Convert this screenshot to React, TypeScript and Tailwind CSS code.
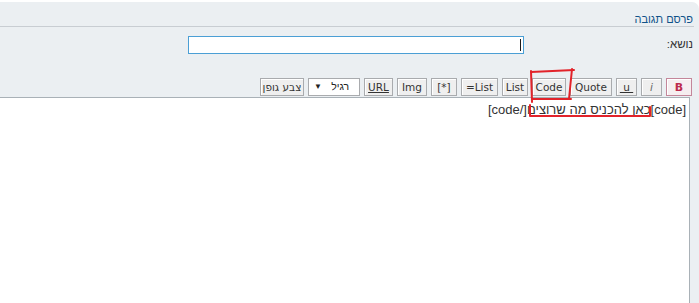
import React from 'react'

const btn =
  'h-[18px] flex items-center justify-center border border-[#a9abae] bg-[#efefef] shadow-[inset_1px_1px_0_#ffffff] text-[#333] text-[10.5px] leading-none font-["DejaVu_Sans",sans-serif]'

export default function App() {
  return (
    <div dir="rtl" className="relative w-[699px] h-[303px] overflow-hidden bg-white font-['Liberation_Sans',sans-serif]">
      <div className="mt-[2px] h-[301px] bg-[#ebeff2] rounded-tr-[7px]">
        {/* header */}
        <div className="mr-[5px] border-b border-[#c8cdd2]">
          <h3 className="pt-[10px] pr-[1px] text-[11px] leading-[14px] text-[#105289]">פרסם תגובה</h3>
        </div>

        {/* subject row */}
        <div className="mt-[9px] flex items-center">
          <div className="w-[175px] pr-[6px] text-[11.5px] text-[#333]">נושא:</div>
          <div className="w-[336px] h-[18px] border border-[#4b9fd5] bg-white flex items-center">
            <span className="mr-[2px] w-px h-[12px] bg-[#1a1a1a]" />
          </div>
        </div>

        {/* toolbar */}
        <div className="mt-[24px] pr-[7px] flex items-center gap-[4px]">
          <button dir="ltr" className={`${btn} w-[26px] border-[#c4869a] bg-[#f6eef0] text-[#bc2a4d] font-bold text-[11px]`}>B</button>
          <button dir="ltr" className={`${btn} w-[21px] italic text-[#666]`}>i</button>
          <button dir="ltr" className={`${btn} w-[21px] underline`}>&nbsp;u&nbsp;</button>
          <button dir="ltr" className={`${btn} w-[42px]`}>Quote</button>
          <button dir="ltr" className={`${btn} w-[34px]`}>Code</button>
          <button dir="ltr" className={`${btn} w-[26px]`}>List</button>
          <button dir="ltr" className={`${btn} w-[37px]`}>=List</button>
          <button dir="ltr" className={`${btn} w-[26px]`}>[*]</button>
          <button dir="ltr" className={`${btn} w-[30px]`}>Img</button>
          <button dir="ltr" className={`${btn} w-[29px] underline font-medium text-[#222]`}>URL</button>
          <div className="w-[52px] h-[18px] flex items-center justify-between pr-[10px] pl-[5px] border border-[#a9abae] bg-white text-[10.5px] text-[#222]">
            <span>רגיל</span>
            <span className="text-[8px]">▼</span>
          </div>
          <button className={`${btn} w-[44px] text-[9.5px]`}>צבע גופן</button>
        </div>

        {/* message */}
        <div className="mt-[1px] mr-[9px] h-[206px] border-t border-r border-[#a9b1b7] bg-white pt-[4px] pr-[3px] text-[13px] leading-[15px] text-[#333]">
          [code]כאן להכניס מה שרוצים[/code]
        </div>
      </div>

      {/* red hand annotations */}
      <svg className="absolute left-0 top-0 pointer-events-none" width="699" height="303" viewBox="0 0 699 303" fill="none" stroke="#e2232a" strokeWidth="2" strokeLinecap="round" strokeLinejoin="round">
        <path d="M531 71 L532 102" />
        <path d="M531 72 L574 70" />
        <path d="M572 69 L569 99" />
        <path d="M532 99 L571 99" />
        <path d="M530 105 L530 116 L650 116 L650 107" />
      </svg>
    </div>
  )
}
